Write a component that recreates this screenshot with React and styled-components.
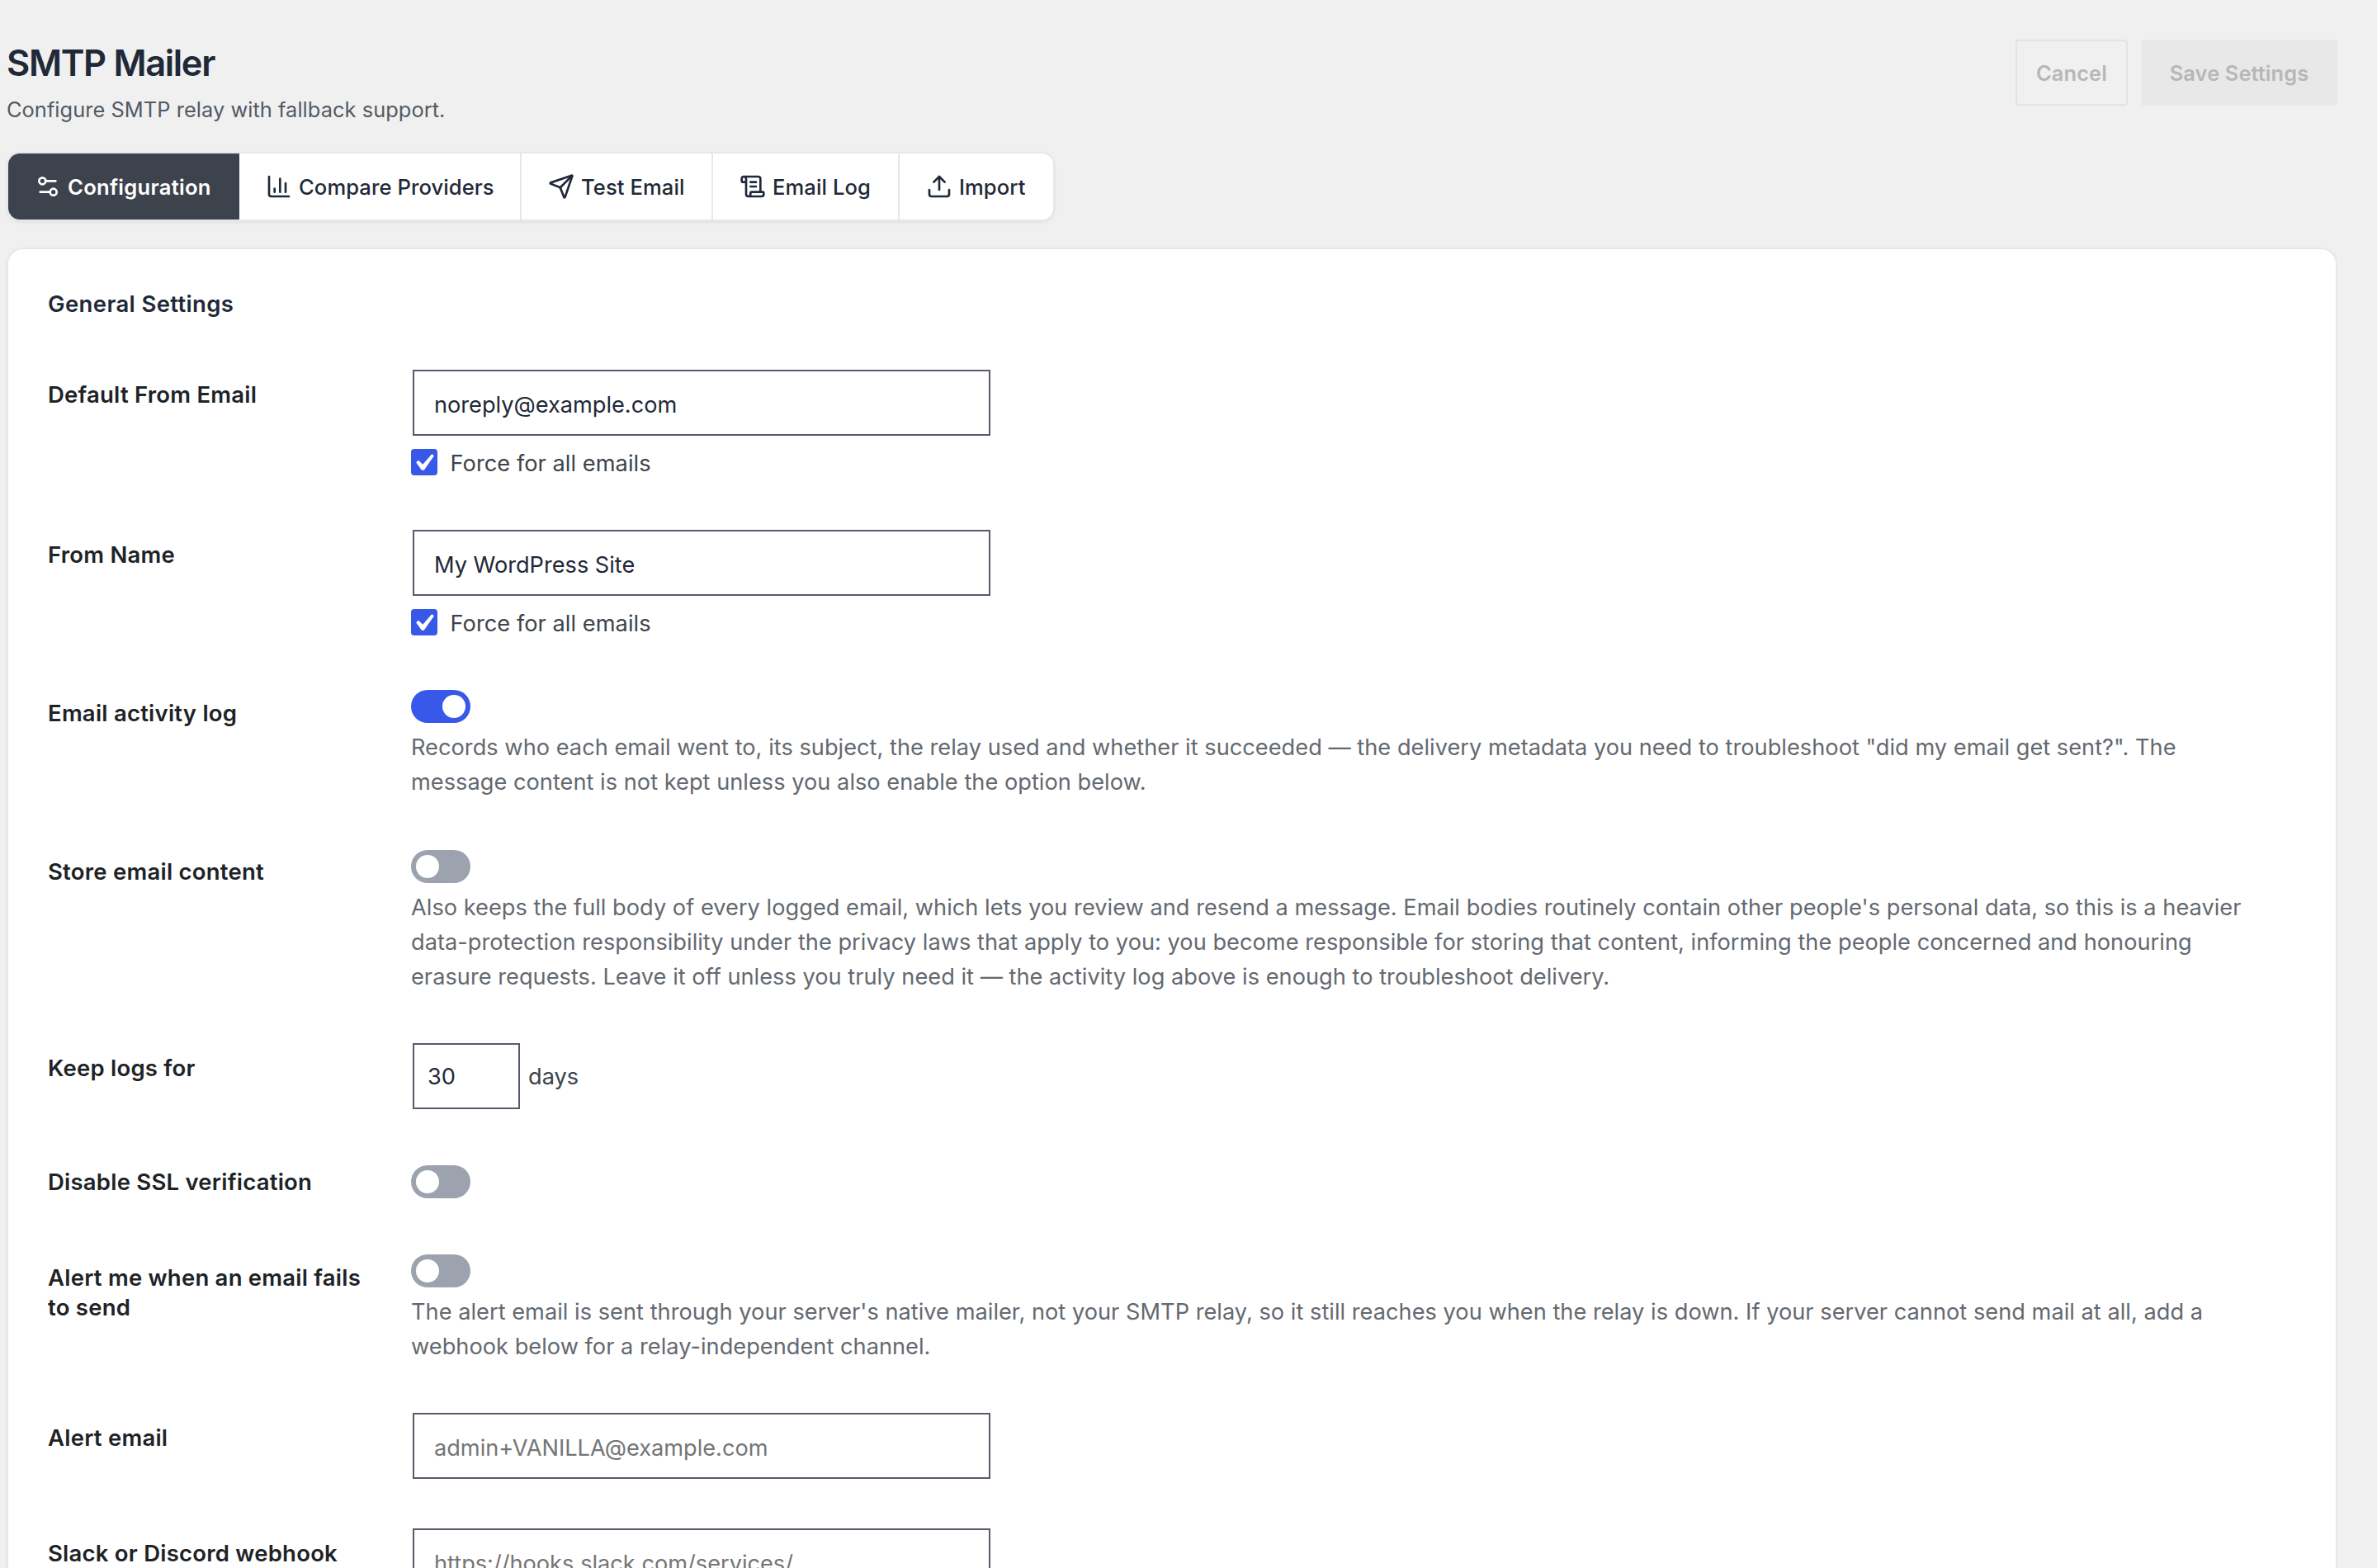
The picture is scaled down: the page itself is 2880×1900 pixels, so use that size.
import React from 'react';
import styled, { createGlobalStyle } from 'styled-components';
import { Settings2, ChartColumn, Send, ScrollText, Upload } from 'lucide-react';

const GlobalStyle = createGlobalStyle`
  * {
    box-sizing: border-box;
  }

  body {
    margin: 0;
    height: 1900px;
    overflow: hidden;
    background-color: #f0f0f0;
    font-family: Inter, 'Liberation Sans', sans-serif;
    font-size: 27.2px;
    letter-spacing: 0.02px;
    color: #3c434a;
  }
`;

const Page = styled.div`
  width: 2832px;
  height: 1900px;
  padding: 48px 0 0 8px;
  overflow: hidden;
`;

const Header = styled.header`
  display: flex;
  justify-content: space-between;
  align-items: flex-start;
  height: 136px;
`;

const Title = styled.h1`
  margin: 2px 0 13px;
  font-size: 43.5px;
  font-weight: 600;
  line-height: 52px;
  letter-spacing: -1.35px;
  color: #1f2937;
`;

const SubTitle = styled.p`
  margin: 0;
  font-size: 25.4px;
  line-height: 36px;
  letter-spacing: 0.05px;
  color: #535a64;
`;

const Actions = styled.div`
  display: flex;
  gap: 16px;
`;

const Button = styled.button`
  width: ${({ $primary }) => ($primary ? 238 : 136)}px;
  height: 80px;
  padding: 0;
  border: 2px solid ${({ $primary }) => ($primary ? '#e8e8e8' : '#e3e3e3')};
  border-radius: 4px;
  background-color: ${({ $primary }) => ($primary ? '#e8e8e8' : 'transparent')};
  font-family: inherit;
  font-size: 25.4px;
  font-weight: 600;
  letter-spacing: 0.1px;
  color: #b7b7b7;
`;

const Tabs = styled.nav`
  display: inline-flex;
  height: 84px;
  border: 2px solid #e5e7eb;
  border-radius: 16px;
  overflow: hidden;
  background-color: #fff;
  box-shadow: 0 2px 4px rgba(0, 0, 0, 0.06);
`;

const Tab = styled.a`
  display: flex;
  align-items: center;
  gap: 8px;
  width: ${({ $width }) => $width}px;
  padding-left: 32px;
  border-right: ${({ $last }) => ($last ? 0 : 2)}px solid ${({ $active }) => ($active ? '#3d434c' : '#e5e7eb')};
  background-color: ${({ $active }) => ($active ? '#3d434c' : '#fff')};
  font-size: 25.6px;
  font-weight: ${({ $active }) => ($active ? 600 : 500)};
  letter-spacing: ${({ $active }) => ($active ? 0.28 : 0.08)}px;
  white-space: nowrap;
  color: ${({ $active }) => ($active ? '#fff' : '#1f2937')};

  svg {
    flex: none;
  }
`;

const Card = styled.section`
  margin-top: 32px;
  width: 2824px;
  height: 1700px;
  padding: 46px 48px;
  border: 2px solid #e5e7eb;
  border-radius: 20px;
  background-color: #fff;
  box-shadow: 0 2px 4px rgba(0, 0, 0, 0.05);
`;

const SectionTitle = styled.h2`
  margin: 0;
  height: 100px;
  padding-top: 2px;
  font-size: 27.5px;
  font-weight: 600;
  line-height: 36px;
  letter-spacing: 0.36px;
  color: #1f2937;
`;

const Row = styled.div`
  display: grid;
  grid-template-columns: 440px 1fr;
  height: ${({ $height }) => $height}px;
`;

const Label = styled.div`
  width: 400px;
  padding-top: ${({ $top }) => $top}px;
  font-size: 27.5px;
  font-weight: 600;
  line-height: 36px;
  letter-spacing: 0.23px;
  color: #1d2327;
`;

const Input = styled.input`
  display: block;
  width: ${({ $small }) => ($small ? 130 : 700)}px;
  height: 80px;
  margin-left: 2px;
  padding: ${({ $small }) => ($small ? '0 0 0 16px' : '4px 24px 0')};
  border: 2px solid #555c69;
  border-radius: 0;
  outline: 0;
  background-color: #fff;
  font-family: inherit;
  font-size: 27.2px;
  letter-spacing: -0.02px;
  color: #1f2937;

  &::placeholder {
    color: #757575;
  }
`;

const Inline = styled.div`
  display: flex;
  align-items: center;
  gap: 10px;
  height: 80px;
`;

const CheckLabel = styled.label`
  display: flex;
  gap: 15.5px;
  margin-top: 16px;
  line-height: 36px;
  letter-spacing: 0.05px;
`;

const CheckBox = styled.span`
  width: 32px;
  height: 32px;
  border-radius: 4px;
  background-color: #3858e9;

  svg {
    display: block;
  }
`;

const Switch = styled.div`
  display: flex;
  align-items: center;
  justify-content: ${({ $on }) => ($on ? 'flex-end' : 'flex-start')};
  width: 72px;
  height: 40px;
  padding: 0 6px;
  border-radius: 20px;
  background-color: ${({ $on }) => ($on ? '#3858e9' : '#9ca3af')};
`;

const Knob = styled.span`
  width: 28px;
  height: 28px;
  border-radius: 50%;
  background-color: #fff;
`;

const Description = styled.p`
  margin: 9px 0 0;
  line-height: 42px;
  white-space: nowrap;
  color: #646970;
`;

const tabs = [
  { label: 'Configuration', Icon: Settings2, width: 280, active: true },
  { label: 'Compare Providers', Icon: ChartColumn, width: 342 },
  { label: 'Test Email', Icon: Send, width: 232 },
  { label: 'Email Log', Icon: ScrollText, width: 226 },
  { label: 'Import', Icon: Upload, width: 186, last: true },
];

const Toggle = ({ on }) => (
  <Switch $on={ on } role="switch" aria-checked={ !!on }>
    <Knob />
  </Switch>
);

const ForceAll = () => (
  <CheckLabel>
    <CheckBox>
      <svg width="32" height="32" viewBox="2.86 1.9 15.24 15.24">
        <path fill="#fff" d="M14.83 4.89l1.34.94-5.81 8.38H9.02L5.78 9.67l1.34-1.25 2.57 2.4z" />
      </svg>
    </CheckBox>
    Force for all emails
  </CheckLabel>
);

const Field = ({ label, height, top = 12, children }) => (
  <Row $height={ height }>
    <Label $top={ top }>{ label }</Label>
    <div>{ children }</div>
  </Row>
);

const App = () => (
  <Page>
    <GlobalStyle />
    <Header>
      <div>
        <Title>SMTP Mailer</Title>
        <SubTitle>Configure SMTP relay with fallback support.</SubTitle>
      </div>
      <Actions>
        <Button disabled>Cancel</Button>
        <Button $primary disabled>Save Settings</Button>
      </Actions>
    </Header>
    <Tabs>
      { tabs.map(({ label, Icon, width, active, last }) => (
        <Tab key={ label } $width={ width } $active={ active } $last={ last }>
          <Icon size={ 32 } strokeWidth={ 2 } />
          { label }
        </Tab>
      )) }
    </Tabs>
    <Card>
      <SectionTitle>General Settings</SectionTitle>
      <Field label="Default From Email" height={ 194 }>
        <Input defaultValue="noreply@example.com" />
        <ForceAll />
      </Field>
      <Field label="From Name" height={ 194 }>
        <Input defaultValue="My WordPress Site" />
        <ForceAll />
      </Field>
      <Field label="Email activity log" height={ 194 } top={ 10 }>
        <Toggle on />
        <Description>
          Records who each email went to, its subject, the relay used and whether it succeeded — the delivery metadata you need to troubleshoot "did my email get sent?". The
          <br />
          message content is not kept unless you also enable the option below.
        </Description>
      </Field>
      <Field label="Store email content" height={ 234 } top={ 8 }>
        <Toggle />
        <Description>
          Also keeps the full body of every logged email, which lets you review and resend a message. Email bodies routinely contain other people's personal data, so this is a heavier
          <br />
          data-protection responsibility under the privacy laws that apply to you: you become responsible for storing that content, informing the people concerned and honouring
          <br />
          erasure requests. Leave it off unless you truly need it — the activity log above is enough to troubleshoot delivery.
        </Description>
      </Field>
      <Field label="Keep logs for" height={ 148 }>
        <Inline>
          <Input $small defaultValue="30" />
          days
        </Inline>
      </Field>
      <Field label="Disable SSL verification" height={ 108 } top={ 2 }>
        <Toggle />
      </Field>
      <Field label="Alert me when an email fails to send" height={ 192 } top={ 10 }>
        <Toggle />
        <Description>
          The alert email is sent through your server's native mailer, not your SMTP relay, so it still reaches you when the relay is down. If your server cannot send mail at all, add a
          <br />
          webhook below for a relay-independent channel.
        </Description>
      </Field>
      <Field label="Alert email" height={ 140 }>
        <Input placeholder="admin+VANILLA@example.com" />
      </Field>
      <Field label="Slack or Discord webhook" height={ 140 }>
        <Input placeholder="https://hooks.slack.com/services/" />
      </Field>
    </Card>
  </Page>
);

export default App;
